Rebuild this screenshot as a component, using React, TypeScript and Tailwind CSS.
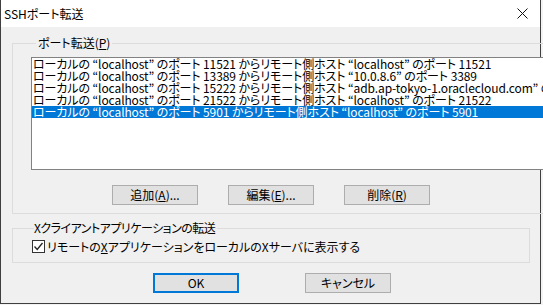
import React from "react";

const rows = [
  "ローカルの “localhost” のポート 11521 からリモート側ホスト “localhost” のポート 11521",
  "ローカルの “localhost” のポート 13389 からリモート側ホスト “10.0.8.6” のポート 3389",
  "ローカルの “localhost” のポート 15222 からリモート側ホスト “adb.ap-tokyo-1.oraclecloud.com” のポート 1522",
  "ローカルの “localhost” のポート 21522 からリモート側ホスト “localhost” のポート 21522",
  "ローカルの “localhost” のポート 5901 からリモート側ホスト “localhost” のポート 5901",
];

function Btn({ children, def }: { children: React.ReactNode; def?: boolean }) {
  return (
    <div
      className={
        "w-[86px] h-[20px] flex items-center justify-center bg-[#e1e1e1] text-[12px] leading-[12px] text-black " +
        (def ? "border-2 border-[#0078d7]" : "border border-[#adadad]")
      }
    >
      {children}
    </div>
  );
}

export default function App() {
  return (
    <div className="w-[543px] h-[305px] bg-[#f3f3f3] font-['Noto_Sans_CJK_JP',sans-serif] [font-feature-settings:'palt'] text-black">
      <div className="w-[541px] h-[304px] border-x border-b border-[#3f3f3f] bg-[#f0f0f0] flex flex-col">
        {/* title bar */}
        <div className="h-[27px] bg-white flex items-center justify-between pl-[3px] pr-[12px] shrink-0">
          <span className="text-[12px] leading-[14px]">SSHポート転送</span>
          <svg width="11" height="11" viewBox="0 0 11 11">
            <path d="M0.5 0.5 L10.5 10.5 M10.5 0.5 L0.5 10.5" stroke="#111" strokeWidth="1" fill="none" />
          </svg>
        </div>
        {/* body */}
        <div className="flex-1 pl-[11px] pr-[10px] pt-[9px] flex flex-col">
          <fieldset className="border border-[#dcdcdc] pl-[18px] pr-[16px] pb-[8px]">
            <legend className="ml-[5px] px-[2px] text-[12px] leading-[14px]">
              ポート転送(<span className="underline">P</span>)
            </legend>
            <div className="mt-[7px] h-[113px] border border-[#828282] bg-white overflow-hidden text-[12px] leading-[12px] tracking-[-0.1px]">
              {rows.map((r, i) => (
                <div
                  key={i}
                  className={
                    "h-[12px] pl-[1px] whitespace-nowrap " +
                    (i === 4 ? "bg-[#0078d7] text-white" : "")
                  }
                >
                  {r}
                </div>
              ))}
            </div>
            <div className="mt-[15px] flex pl-[81px] gap-[30px]">
              <Btn>
                追加(<span className="underline">A</span>)...
              </Btn>
              <Btn>
                編集(<span className="underline">E</span>)...
              </Btn>
              <Btn>
                削除(<span className="underline">R</span>)
              </Btn>
            </div>
          </fieldset>
          <fieldset className="mt-[7px] border border-[#dcdcdc] pl-[19px] pb-[9px]">
            <legend className="ml-[2px] pr-[2px] text-[12px] leading-[14px] tracking-[-0.5px]">
              Xクライアントアプリケーションの転送
            </legend>
            <div className="mt-[5px] flex items-center h-[13px]">
              <div className="w-[13px] h-[13px] border border-[#333] bg-white flex items-center justify-center">
                <svg width="11" height="11" viewBox="0 0 11 11">
                  <path d="M1.5 5.5 L4.2 8.5 L9.5 2" stroke="#222" strokeWidth="1.3" fill="none" />
                </svg>
              </div>
              <span className="ml-[2px] text-[12px] leading-[13px]">
                リモートの<span className="underline">X</span>アプリケーションをローカルのXサーバに表示する
              </span>
            </div>
          </fieldset>
          <div className="mt-[10px] flex pl-[141px] gap-[66px]">
            <Btn def>OK</Btn>
            <Btn>キャンセル</Btn>
          </div>
        </div>
      </div>
    </div>
  );
}
